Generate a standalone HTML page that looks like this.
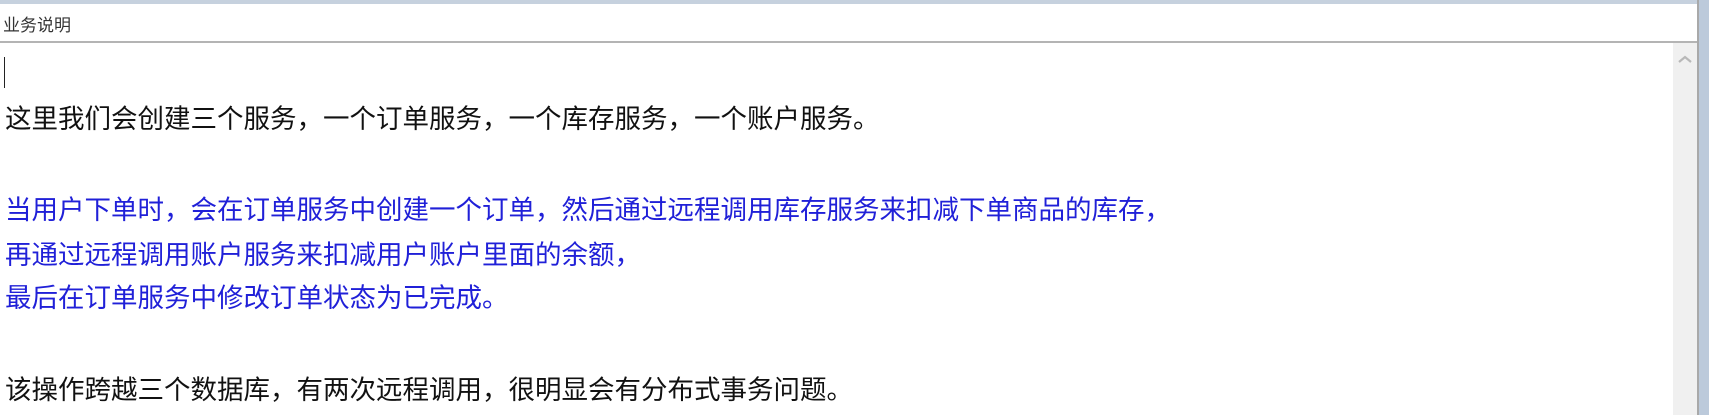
<!DOCTYPE html>
<html><head><meta charset="utf-8"><style>
html,body{margin:0;padding:0;width:1709px;height:415px;overflow:hidden;background:#fff;font-family:"Liberation Sans","Noto Sans CJK SC","Microsoft YaHei",sans-serif;}
.top{position:absolute;left:0;top:0;width:1709px;height:4px;background:#c6d1de;}
.rb{position:absolute;left:1697px;top:0;width:12px;height:415px;background:#bccadb;border-left:2px solid #a9a9a9;box-sizing:border-box;}
.hdr{position:absolute;left:0;top:4px;width:1697px;height:37px;background:#fff;border-bottom:2px solid #b4b4b4;}
.hdr span{position:absolute;left:3px;top:7px;font-size:17px;color:#333;}
.sb{position:absolute;left:1673px;top:43px;width:24px;height:372px;background:#f0f0f0;}
.l{position:absolute;left:5px;font-size:26.5px;line-height:30px;white-space:nowrap;color:#111;}
.b{color:#2020d8;}
.cur{position:absolute;left:4px;top:57px;width:1px;height:31px;background:#222;}
</style></head><body>
<div class="top"></div>
<div class="hdr"><span>业务说明</span></div>
<div class="sb"><svg width="24" height="20" style="position:absolute;left:0;top:6px"><path d="M6 13 L12 8 L18 13" stroke="#b8b8b8" stroke-width="2.2" fill="none"/></svg></div>
<div class="rb"></div>
<div class="cur"></div>
<div class="l" style="top:104px">这里我们会创建三个服务，一个订单服务，一个库存服务，一个账户服务。</div>
<div class="l b" style="top:195px">当用户下单时，会在订单服务中创建一个订单，然后通过远程调用库存服务来扣减下单商品的库存，</div>
<div class="l b" style="top:240px">再通过远程调用账户服务来扣减用户账户里面的余额，</div>
<div class="l b" style="top:283px">最后在订单服务中修改订单状态为已完成。</div>
<div class="l" style="top:375px">该操作跨越三个数据库，有两次远程调用，很明显会有分布式事务问题。</div>
</body></html>
